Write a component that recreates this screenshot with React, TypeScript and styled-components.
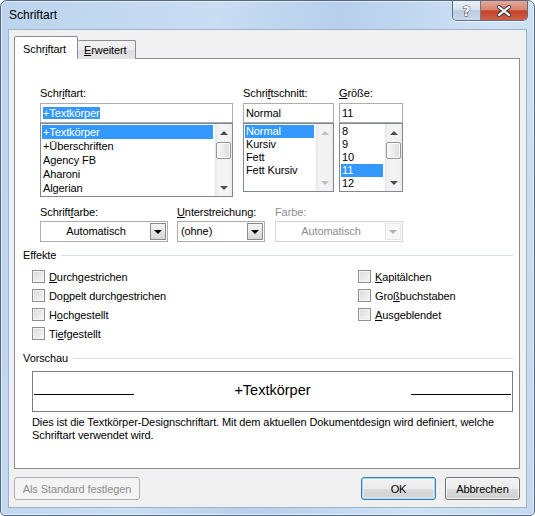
import styled, { createGlobalStyle } from 'styled-components';

const GlobalStyle = createGlobalStyle`
  html, body {
    margin: 0;
    padding: 0;
    background: #ffffff;
  }
  body {
    font-family: 'Liberation Sans', Arial, sans-serif;
    font-size: 11px;
    letter-spacing: -0.1px;
    color: #000;
  }
`;

const fonts = ['+Textkörper', '+Überschriften', 'Agency FB', 'Aharoni', 'Algerian'];
const styles = ['Normal', 'Kursiv', 'Fett', 'Fett Kursiv'];
const sizes = ['8', '9', '10', '11', '12'];

const App = () => {
  return (
    <>
      <GlobalStyle />
      <Window>
        <TitleBar>
          <Title>Schriftart</Title>
          <CaptionButtons>
            <HelpButton>?</HelpButton>
            <CloseButton>
              <svg width="16" height="12" viewBox="0 0 16 12">
                <path d="M3 2 L13 10 M13 2 L3 10" stroke="#474747" strokeWidth="4.2" strokeLinecap="round" />
                <path d="M3 2 L13 10 M13 2 L3 10" stroke="#ffffff" strokeWidth="2.2" strokeLinecap="round" />
              </svg>
            </CloseButton>
          </CaptionButtons>
        </TitleBar>
        <Client>
          <TabStrip>
            <Tab $active $width={64}>
              Schr<Key>i</Key>ftart
            </Tab>
            <Tab $width={58}>
              <Key>E</Key>rweitert
            </Tab>
          </TabStrip>
          <TabPage>
            <FontRow>
              <FontColumn $width={193} $gap={0}>
                <FieldLabel>
                  Schr<Key>i</Key>ftart:
                </FieldLabel>
                <TextBox>
                  <SelectedText>+Textkörper</SelectedText>
                </TextBox>
                <ListBox $height={74}>
                  <ListItems>
                    {fonts.map((f, i) => (
                      <ListItem key={f} $selected={i === 0} $rowHeight={14}>
                        {f}
                      </ListItem>
                    ))}
                  </ListItems>
                  <ScrollBar>
                    <ScrollArrow $dir="up" />
                    <ScrollThumb />
                    <ScrollSpacer />
                    <ScrollArrow $dir="down" />
                  </ScrollBar>
                </ListBox>
              </FontColumn>
              <FontColumn $width={91} $gap={10}>
                <FieldLabel>
                  Schri<Key>f</Key>tschnitt:
                </FieldLabel>
                <TextBox>Normal</TextBox>
                <ListBox $height={69}>
                  <ListItems>
                    {styles.map((s, i) => (
                      <ListItem key={s} $selected={i === 0} $rowHeight={13}>
                        {s}
                      </ListItem>
                    ))}
                  </ListItems>
                  <ScrollBar>
                    <ScrollArrow $dir="up" $disabled />
                    <ScrollSpacer />
                    <ScrollArrow $dir="down" $disabled />
                  </ScrollBar>
                </ListBox>
              </FontColumn>
              <FontColumn $width={64} $gap={5}>
                <FieldLabel>
                  <Key>G</Key>röße:
                </FieldLabel>
                <TextBox>11</TextBox>
                <ListBox $height={69}>
                  <ListItems>
                    {sizes.map((s) => (
                      <ListItem key={s} $selected={s === '11'} $rowHeight={13}>
                        {s}
                      </ListItem>
                    ))}
                  </ListItems>
                  <ScrollBar>
                    <ScrollArrow $dir="up" />
                    <ScrollThumb />
                    <ScrollSpacer />
                    <ScrollArrow $dir="down" />
                  </ScrollBar>
                </ListBox>
              </FontColumn>
            </FontRow>

            <ComboRow>
              <ComboColumn $width={128} $gap={0}>
                <ComboLabel>
                  Schrift<Key>f</Key>arbe:
                </ComboLabel>
                <Combo>
                  <ComboText $center>Automatisch</ComboText>
                  <DropButton>
                    <Triangle />
                  </DropButton>
                </Combo>
              </ComboColumn>
              <ComboColumn $width={88} $gap={9}>
                <ComboLabel>
                  <Key>U</Key>nterstreichung:
                </ComboLabel>
                <Combo>
                  <ComboText>(ohne)</ComboText>
                  <DropButton>
                    <Triangle />
                  </DropButton>
                </Combo>
              </ComboColumn>
              <ComboColumn $width={128} $gap={10}>
                <ComboLabel $disabled>Farbe:</ComboLabel>
                <Combo $disabled>
                  <ComboText $center $disabled>
                    Automatisch
                  </ComboText>
                  <DropButton $disabled>
                    <Triangle $disabled />
                  </DropButton>
                </Combo>
              </ComboColumn>
            </ComboRow>

            <GroupHeader $gap={6}>
              <span>Effekte</span>
              <GroupLine />
            </GroupHeader>
            <EffectsGrid>
              <CheckRow>
                <CheckBox />
                <span>
                  <Key>D</Key>urchgestrichen
                </span>
              </CheckRow>
              <CheckRow>
                <CheckBox />
                <span>
                  Do<Key>p</Key>pelt durchgestrichen
                </span>
              </CheckRow>
              <CheckRow>
                <CheckBox />
                <span>
                  H<Key>o</Key>chgestellt
                </span>
              </CheckRow>
              <CheckRow>
                <CheckBox />
                <span>
                  Ti<Key>e</Key>fgestellt
                </span>
              </CheckRow>
              <CheckRow>
                <CheckBox />
                <span>
                  <Key>K</Key>apitälchen
                </span>
              </CheckRow>
              <CheckRow>
                <CheckBox />
                <span>
                  Gro<Key>ß</Key>buchstaben
                </span>
              </CheckRow>
              <CheckRow>
                <CheckBox />
                <span>
                  <Key>A</Key>usgeblendet
                </span>
              </CheckRow>
            </EffectsGrid>

            <GroupHeader $gap={8}>
              <span>Vorschau</span>
              <GroupLine />
            </GroupHeader>
            <PreviewBox>
              <PreviewLine />
              <PreviewText>+Textkörper</PreviewText>
              <PreviewLine />
            </PreviewBox>
            <Description>
              Dies ist die Textkörper-Designschriftart. Mit dem aktuellen Dokumentdesign wird definiert, welche
              Schriftart verwendet wird.
            </Description>
          </TabPage>

          <ButtonRow>
            <Button $width={126} $disabled>
              Als Standard festlegen
            </Button>
            <ButtonGroup>
              <Button $width={75} $default>
                OK
              </Button>
              <Button $width={75}>Abbrechen</Button>
            </ButtonGroup>
          </ButtonRow>
        </Client>
      </Window>
    </>
  );
};

export default App;

const Window = styled.div`
  width: 535px;
  height: 516px;
  box-sizing: border-box;
  border: 1px solid #56687d;
  border-radius: 7px 7px 5px 5px;
  background: linear-gradient(100deg, #bcd4ee 0%, #c9ddf3 35%, #b6cfeb 55%, #cfe2f6 80%, #c4d9f0 100%);
  display: flex;
  flex-direction: column;
  padding: 0 7px 7px 7px;
  box-shadow: inset 0 0 0 1px rgba(255, 255, 255, 0.55);
`;

const TitleBar = styled.div`
  height: 28px;
  display: flex;
  justify-content: space-between;
  align-items: flex-start;
  flex-shrink: 0;
`;

const Title = styled.div`
  padding-left: 1px;
  line-height: 29px;
  font-size: 12px;
  letter-spacing: 0;
  color: #000;
`;

const CaptionButtons = styled.div`
  display: flex;
  margin-right: -1px;
  border: 1px solid #5e6f85;
  border-top: none;
  border-radius: 0 0 5px 5px;
  overflow: hidden;
  height: 19px;
  box-shadow: 0 1px 0 rgba(255, 255, 255, 0.7);
`;

const HelpButton = styled.div`
  width: 27px;
  height: 19px;
  display: flex;
  align-items: center;
  justify-content: center;
  border-right: 1px solid #6b7c92;
  background: linear-gradient(180deg, #e9f0f8 0%, #d7e3f0 45%, #bccde2 50%, #c9d8ea 100%);
  font-family: 'DejaVu Sans', sans-serif;
  font-weight: bold;
  font-size: 14px;
  color: #ffffff;
  -webkit-text-stroke: 1px #4b4b4b;
  paint-order: stroke fill;
`;

const CloseButton = styled.div`
  width: 46px;
  height: 19px;
  display: flex;
  align-items: center;
  justify-content: center;
  background: linear-gradient(180deg, #e8a898 0%, #d98470 45%, #c4402a 52%, #cf624a 100%);
`;

const Client = styled.div`
  flex: 1;
  background: #f0f0f0;
  border: 1px solid #9db3cc;
  padding: 7px 6px 0 5px;
  display: flex;
  flex-direction: column;
`;

const TabStrip = styled.div`
  display: flex;
  align-items: flex-end;
  height: 22px;
  position: relative;
  z-index: 1;
  margin-bottom: -1px;
`;

const Tab = styled.div<{ $active?: boolean; $width: number }>`
  box-sizing: border-box;
  width: ${(p) => p.$width}px;
  height: ${(p) => (p.$active ? '23px' : '19px')};
  border: 1px solid #898c95;
  border-bottom: ${(p) => (p.$active ? '1px solid #ffffff' : 'none')};
  border-left: ${(p) => (p.$active ? '1px solid #898c95' : 'none')};
  background: ${(p) =>
    p.$active ? '#ffffff' : 'linear-gradient(180deg, #f3f3f3 0%, #ebebeb 50%, #dedede 51%, #e5e5e5 100%)'};
  padding: ${(p) => (p.$active ? '5px 0 0 8px' : '2px 0 0 6px')};
  line-height: 15px;
  border-radius: 2px 2px 0 0;
`;

const Key = styled.u`
  text-decoration: underline;
  text-underline-offset: 1px;
`;

const TabPage = styled.div`
  box-sizing: border-box;
  height: 411px;
  background: #ffffff;
  border: 1px solid #898c95;
  padding: 27px 6px 0 8px;
  display: flex;
  flex-direction: column;
`;

const FontRow = styled.div`
  display: flex;
  align-items: flex-start;
  margin-left: 17px;
`;

const FontColumn = styled.div<{ $width: number; $gap: number }>`
  width: ${(p) => p.$width}px;
  margin-left: ${(p) => p.$gap}px;
  display: flex;
  flex-direction: column;
`;

const FieldLabel = styled.div`
  line-height: 15px;
  height: 15px;
  margin-bottom: 2px;
`;

const TextBox = styled.div`
  box-sizing: border-box;
  height: 20px;
  border: 1px solid #abadb3;
  padding: 0 2px;
  line-height: 18px;
  white-space: nowrap;
`;

const SelectedText = styled.span`
  background: #3399ff;
  color: #fff;
`;

const ListBox = styled.div<{ $height: number }>`
  box-sizing: border-box;
  height: ${(p) => p.$height}px;
  border: 1px solid #828790;
  display: flex;
  background: #fff;
`;

const ListItems = styled.div`
  flex: 1;
  padding: 1px;
  overflow: hidden;
  min-width: 0;
`;

const ListItem = styled.div<{ $selected?: boolean; $rowHeight: number }>`
  height: ${(p) => p.$rowHeight}px;
  line-height: ${(p) => p.$rowHeight}px;
  padding-left: 1px;
  white-space: nowrap;
  background: ${(p) => (p.$selected ? '#3399ff' : 'transparent')};
  color: ${(p) => (p.$selected ? '#ffffff' : '#000')};
`;

const ScrollBar = styled.div`
  width: 17px;
  flex-shrink: 0;
  display: flex;
  flex-direction: column;
  background: linear-gradient(90deg, #e8e8e8 0%, #f3f3f3 20%, #f3f3f3 80%, #ebebeb 100%);
  border-left: 1px solid #f7f7f7;
`;

const ScrollArrow = styled.div<{ $dir: 'up' | 'down'; $disabled?: boolean }>`
  height: 17px;
  flex-shrink: 0;
  display: flex;
  align-items: center;
  justify-content: center;
  &::after {
    content: '';
    width: 0;
    height: 0;
    border-left: 4px solid transparent;
    border-right: 4px solid transparent;
    ${(p) => (p.$dir === 'up' ? 'border-bottom' : 'border-top')}: 4px solid
      ${(p) => (p.$disabled ? '#bfbfbf' : '#4d4d4d')};
  }
`;

const ScrollThumb = styled.div`
  box-sizing: border-box;
  height: 17px;
  margin: 1px 1px 0 1px;
  border: 1px solid #979797;
  border-radius: 2px;
  background: linear-gradient(90deg, #f6f6f6 0%, #ececec 50%, #dcdcdc 100%);
  box-shadow: inset 0 0 0 1px #fbfbfb;
`;

const ScrollSpacer = styled.div`
  flex: 1;
`;

const ComboRow = styled.div`
  display: flex;
  margin: 8px 0 0 17px;
`;

const ComboColumn = styled.div<{ $width: number; $gap: number }>`
  width: ${(p) => p.$width}px;
  margin-left: ${(p) => p.$gap}px;
  display: flex;
  flex-direction: column;
`;

const ComboLabel = styled.div<{ $disabled?: boolean }>`
  line-height: 15px;
  margin-bottom: 1px;
  color: ${(p) => (p.$disabled ? '#8d8d8d' : '#000')};
`;

const Combo = styled.div<{ $disabled?: boolean }>`
  box-sizing: border-box;
  height: 21px;
  border: 1px solid ${(p) => (p.$disabled ? '#d4d4d4' : '#abadb3')};
  background: #fff;
  display: flex;
  align-items: center;
  padding: 1px;
`;

const ComboText = styled.div<{ $center?: boolean; $disabled?: boolean }>`
  flex: 1;
  text-align: ${(p) => (p.$center ? 'center' : 'left')};
  padding-left: ${(p) => (p.$center ? 0 : 2)}px;
  color: ${(p) => (p.$disabled ? '#8d8d8d' : '#000')};
  line-height: 17px;
`;

const DropButton = styled.div<{ $disabled?: boolean }>`
  box-sizing: border-box;
  width: 16px;
  height: 17px;
  display: flex;
  align-items: center;
  justify-content: center;
  border: 1px solid ${(p) => (p.$disabled ? '#e6e6e6' : '#8a8a8a')};
  background: ${(p) =>
    p.$disabled ? '#f7f7f7' : 'linear-gradient(180deg, #f4f4f4 0%, #e6e6e6 50%, #d6d6d6 100%)'};
`;

const Triangle = styled.span<{ $disabled?: boolean }>`
  width: 0;
  height: 0;
  border-left: 4px solid transparent;
  border-right: 4px solid transparent;
  border-top: 4px solid ${(p) => (p.$disabled ? '#b4b4b4' : '#000')};
`;

const GroupHeader = styled.div<{ $gap: number }>`
  display: flex;
  align-items: center;
  line-height: 15px;
  margin-top: ${(p) => p.$gap}px;
  gap: 5px;
`;

const GroupLine = styled.div`
  flex: 1;
  height: 1px;
  background: #d5dfe5;
`;

const EffectsGrid = styled.div`
  display: grid;
  grid-template-rows: repeat(4, 19px);
  grid-template-columns: 326px 1fr;
  grid-auto-flow: column;
  margin: 4px 0 0 9px;
`;

const CheckRow = styled.div`
  display: flex;
  align-items: center;
  gap: 4px;
`;

const CheckBox = styled.span`
  box-sizing: border-box;
  width: 13px;
  height: 13px;
  flex-shrink: 0;
  border: 1px solid #8f8f8f;
  background: linear-gradient(135deg, #d8d8d8 0%, #eaeaea 55%, #f8f8f8 100%);
  box-shadow: inset 0 0 0 1px #f4f4f4;
`;

const PreviewBox = styled.div`
  box-sizing: border-box;
  height: 41px;
  margin: 5px 0 0 9px;
  border: 1px solid #7c7c7c;
  display: flex;
  align-items: baseline;
  padding: 9px 1px 0 1px;
`;

const PreviewLine = styled.div`
  width: 100px;
  height: 1px;
  background: #000;
`;

const PreviewText = styled.div`
  flex: 1;
  text-align: center;
  font-size: 14.5px;
  letter-spacing: 0;
  line-height: 18px;
`;

const Description = styled.div`
  margin: 4px 0 0 9px;
  line-height: 13px;
`;

const ButtonRow = styled.div`
  display: flex;
  justify-content: space-between;
  align-items: center;
  margin-top: 8px;
`;

const ButtonGroup = styled.div`
  display: flex;
  gap: 9px;
`;

const Button = styled.div<{ $width: number; $default?: boolean; $disabled?: boolean }>`
  box-sizing: border-box;
  width: ${(p) => p.$width}px;
  height: 23px;
  display: flex;
  align-items: center;
  justify-content: center;
  border-radius: 3px;
  border: 1px solid ${(p) => (p.$default ? '#3c7fb1' : p.$disabled ? '#adb2b5' : '#707070')};
  color: ${(p) => (p.$disabled ? '#8d8d8d' : '#000')};
  background: ${(p) =>
    p.$disabled ? '#f4f4f4' : 'linear-gradient(180deg, #f2f2f2 0%, #ebebeb 50%, #dddddd 51%, #cfcfcf 100%)'};
  box-shadow: ${(p) =>
    p.$disabled
      ? 'none'
      : p.$default
        ? 'inset 0 0 0 1px #9fd5f3, inset 0 0 0 2px rgba(255, 255, 255, 0.5)'
        : 'inset 0 0 0 1px rgba(255, 255, 255, 0.75)'};
`;
